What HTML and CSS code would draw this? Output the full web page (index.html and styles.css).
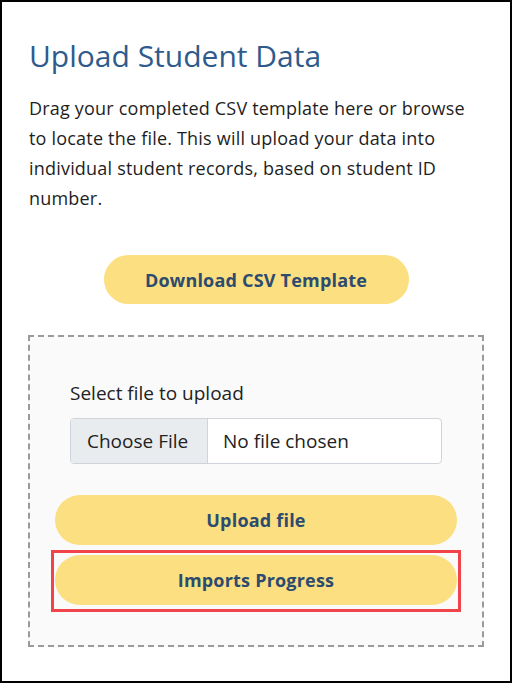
FILE: index.html
```html
<!DOCTYPE html>
<html lang="en">
<head>
<meta charset="utf-8">
<link rel="stylesheet" href="styles.css">
</head>
<body>
<div class="frame">
  <h1 class="title">Upload Student Data</h1>
  <p class="intro">Drag your completed CSV template here or browse to locate the file. This will upload your data into individual student records, based on student ID number.</p>
  <div class="download-row">
    <button class="btn btn-download">Download CSV Template</button>
  </div>
  <div class="dropzone">
    <div class="field">
      <label class="field-label">Select file to upload</label>
      <div class="file-input">
        <span class="file-btn">Choose File</span>
        <span class="file-name">No file chosen</span>
      </div>
    </div>
    <button class="btn btn-wide">Upload file</button>
    <div class="highlight">
      <button class="btn btn-wide">Imports Progress</button>
    </div>
  </div>
</div>
</body>
</html>
```

FILE: styles.css
```css
* { box-sizing: border-box; }
html, body { margin: 0; padding: 0; background: #fff; }
body { font-family: "Open Sans", Lato, Arial, sans-serif; }
.frame {
  width: 512px;
  height: 683px;
  border: 2px solid #000;
  padding: 34px 26px 0 26px;
  background: #fff;
}
.title {
  margin: 0 0 0 1px;
  font-size: 30px;
  font-weight: 400;
  line-height: 40px;
  color: #2e5b8c;
}
.intro {
  margin: 17px 0 0 1px;
  font-size: 18px;
  letter-spacing: 0.2px;
  line-height: 30px;
  color: #1e1e1e;
}
.download-row {
  display: flex;
  justify-content: center;
  margin-top: 42px;
}
.btn {
  border: none;
  background: #fbdf80;
  color: #2d4b6f;
  font-family: inherit;
  font-weight: 700;
  font-size: 18px;
  letter-spacing: 0.2px;
  border-radius: 25px;
  height: 49px;
  padding: 0;
}
.btn-download { width: 305px; }
.dropzone {
  margin-top: 31px;
  border: 2px dashed #9a9a9a;
  background: #fafafa;
  height: 312px;
  padding: 44px 25px 0 25px;
}
.field { margin: 0 15px; }
.field-label {
  display: block;
  font-size: 19px;
  line-height: 24px;
  color: #222;
}
.file-input {
  display: flex;
  margin-top: 13px;
  height: 46px;
  border: 1px solid #ced4da;
  border-radius: 4px;
  background: #fff;
  overflow: hidden;
  font-size: 19px;
  color: #222;
}
.file-btn {
  display: flex;
  align-items: center;
  padding: 0 16px;
  width: 137px;
  background: #e9ecef;
  border-right: 1px solid #ced4da;
}
.file-name {
  display: flex;
  align-items: center;
  padding-left: 15px;
}
.btn-wide {
  display: block;
  width: 100%;
  height: 50px;
  margin-top: 31px;
}
.highlight {
  margin: 5px -4px 0 -4px;
  border: 3px solid #f0444a;
  padding: 2px 1px 4px 1px;
}
.highlight .btn-wide { margin-top: 0; }
```
